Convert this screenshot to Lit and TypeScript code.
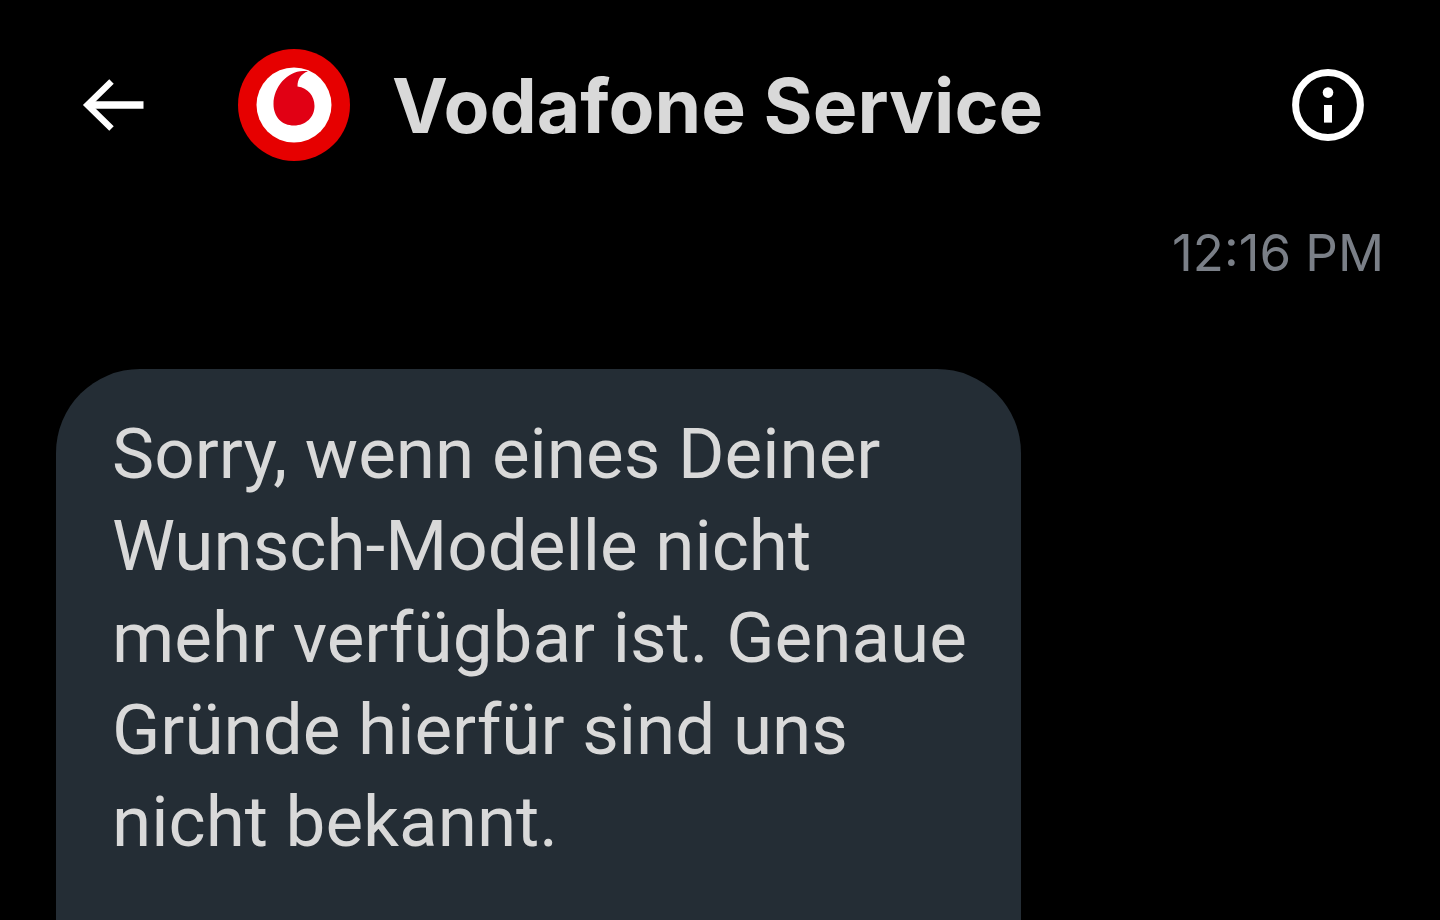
import { LitElement, html, css } from "lit";
import { customElement, property } from "lit/decorators.js";

@customElement("chat-header")
class ChatHeader extends LitElement {
  @property() name = "";

  static styles = css`
    :host { display: block; }
    header { display: flex; align-items: center; height: 112px; padding: 49px 72px 0 74px; }
    button { display: flex; padding: 0; border: 0; background: none; color: #fff; cursor: pointer; }
    svg { display: block; }
    .avatar { margin-left: 84px; }
    h1 { flex: 1; margin: 0 0 0 42px; padding-top: 2px; font-family: Inter, "Liberation Sans", sans-serif; font-size: 75px; line-height: 112px; font-weight: 700; color: #d9d9d9; white-space: nowrap; }
  `;

  render() {
    return html`
      <header>
        <button type="button" aria-label="Back">
          <svg width="80" height="80" viewBox="0 0 80 80" fill="none" stroke="currentColor">
            <path stroke-width="7.4" d="M69.5 40H15" />
            <path stroke-width="6.4" d="M37.5 16.5L13.5 40L37.5 63.5" />
          </svg>
        </button>
        <svg class="avatar" width="112" height="112" viewBox="0 0 112 112" aria-hidden="true">
          <circle cx="56" cy="56" r="56" fill="#e60000" />
          <circle cx="56" cy="56" r="37.5" fill="#fff" />
          <path fill="#e10014" d="M56 76.5C44 76.5 35.5 68 35.5 55C35.5 38 49 22.500 65 22C67 21.800 69 21.800 70 22.300C63 25 59.500 30 59.500 37.500C70 39 76.500 47 76.500 57C76.500 68 68 76.500 56 76.500Z" />
        </svg>
        <h1>${this.name}</h1>
        <button type="button" aria-label="Conversation info">
          <svg width="80" height="80" viewBox="0 0 80 80">
            <circle cx="40" cy="40" r="32.4" fill="none" stroke="currentColor" stroke-width="7" />
            <circle cx="40" cy="27.6" r="5.3" fill="currentColor" />
            <rect x="36" y="40" width="8" height="17.6" fill="currentColor" />
          </svg>
        </button>
      </header>
    `;
  }
}

@customElement("app-root")
class AppRoot extends LitElement {
  static styles = css`
    :host { display: flex; flex-direction: column; min-height: 100vh; background: #000; font-family: Roboto, "Liberation Sans", sans-serif; }
    main { flex: 1; display: flex; flex-direction: column; }
    time { align-self: flex-end; margin: 60px 56px 0 0; font-family: Inter, sans-serif; font-size: 51px; line-height: 64px; color: #7a7f87; }
    .bubble { flex: 1; box-sizing: border-box; width: 67%; margin: 84px 0 0 56px; padding: 39px 48px 39px 56px; border-radius: 84px 84px 0 0; background: #242d35; color: #d9d9d9; }
    p { margin: 0; font-size: 71px; line-height: 92px; }
  `;

  render() {
    return html`
      <chat-header name="Vodafone Service"></chat-header>
      <main>
        <time>12:16 PM</time>
        <article class="bubble">
          <p>Sorry, wenn eines Deiner Wunsch-Modelle nicht mehr verfügbar ist. Genaue Gründe hierfür sind uns nicht bekannt.</p>
        </article>
      </main>
    `;
  }
}
